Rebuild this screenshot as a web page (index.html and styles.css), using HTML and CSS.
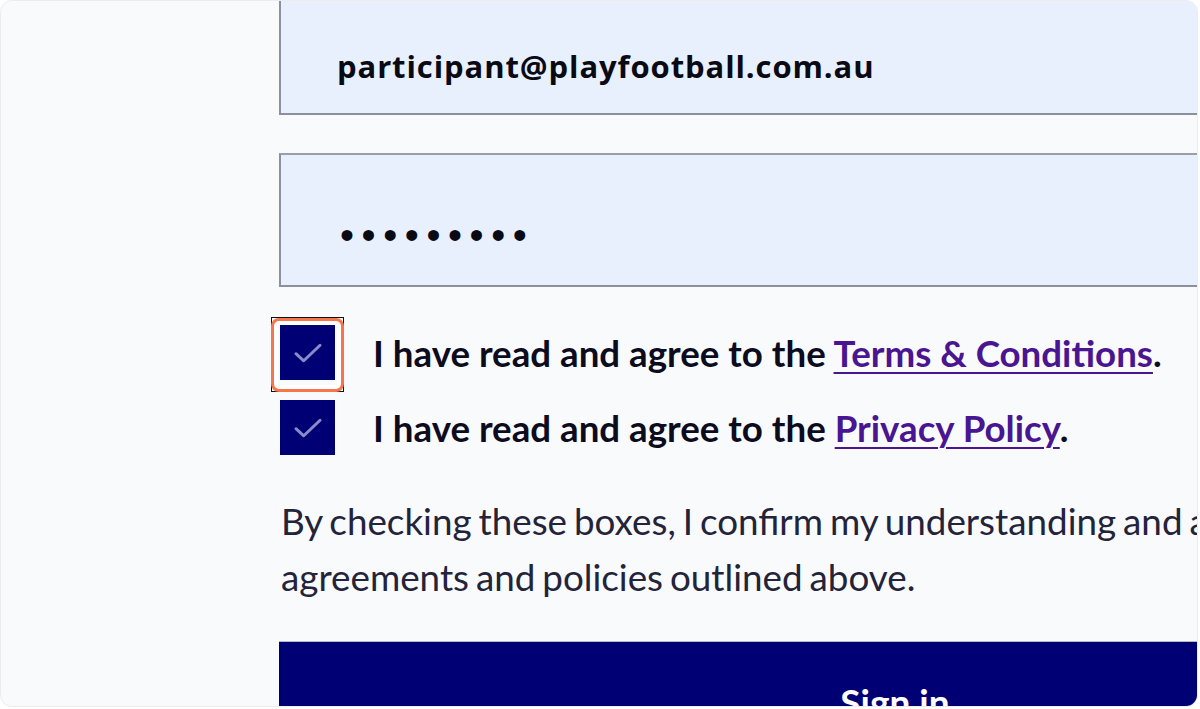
FILE: index.html
```html
<!DOCTYPE html>
<html lang="en">
<head>
<meta charset="utf-8">
<title>Sign in</title>
<link rel="stylesheet" href="styles.css">
</head>
<body>
<div class="card">
  <form class="form">
    <div class="field field-email"><span class="value">participant@playfootball.com.au</span></div>
    <div class="field field-password"><span class="dots">•••••••••</span></div>
    <div class="checks">
      <label class="check-row">
        <span class="box">
          <svg viewBox="0 0 24 24" width="34" height="34"><polyline points="3.5,12.5 9,17.5 20.5,6.5" fill="none" stroke="#8a8ac9" stroke-width="2.1" stroke-linecap="round" stroke-linejoin="round"/></svg>
          <span class="focus-frame"></span>
          <span class="ring"></span>
        </span>
        <span class="label">I have read and agree to the <a href="#" class="link">Terms &amp; Conditions</a>.</span>
      </label>
      <label class="check-row">
        <span class="box">
          <svg viewBox="0 0 24 24" width="34" height="34"><polyline points="3.5,12.5 9,17.5 20.5,6.5" fill="none" stroke="#8a8ac9" stroke-width="2.1" stroke-linecap="round" stroke-linejoin="round"/></svg>
        </span>
        <span class="label">I have read and agree to the <a href="#" class="link">Privacy Policy</a>.</span>
      </label>
    </div>
    <p class="note">By checking these boxes, I confirm my understanding and acceptance of the agreements and policies outlined above.</p>
    <button type="button" class="submit">Sign in</button>
  </form>
</div>
</body>
</html>
```

FILE: styles.css
```css
html, body {
  margin: 0;
  padding: 0;
  background: #ffffff;
}

.card {
  box-sizing: border-box;
  margin: 0 2px 2px 0;
  height: 707px;
  border: 1px solid #ececef;
  border-radius: 12px;
  background: #f9fafc;
  overflow: hidden;
}

.form {
  width: 1232px;
  margin: -20px 0 0 278px;
  display: flex;
  flex-direction: column;
}

.field {
  box-sizing: border-box;
  height: 134px;
  background: #e8f0fe;
  border: 2px solid #8b8f9e;
  border-top-color: #9a9eac;
  display: flex;
  align-items: center;
  padding: 30px 0 0 58px;
  color: #0a0a14;
}

.field-email {
  padding-top: 36px;
}

.field-password {
  margin-top: 38px;
}

.value {
  font-family: "Open Sans", "Noto Sans", sans-serif;
  font-weight: 700;
  font-size: 31px;
  letter-spacing: 0.9px;
  margin-left: -2px;
}

.dots {
  font-family: "Liberation Sans", Arial, sans-serif;
  font-size: 40px;
  letter-spacing: 7.6px;
  margin-left: 1px;
}

.checks {
  display: flex;
  flex-direction: column;
  gap: 20px;
  margin-top: 38px;
}

.check-row {
  display: flex;
  align-items: center;
  gap: 38px;
  padding-left: 1px;
}

.box {
  position: relative;
  flex: none;
  width: 55px;
  height: 55px;
  background: #000075;
  display: flex;
  align-items: center;
  justify-content: center;
}

.box svg {
  display: block;
}

.focus-frame {
  position: absolute;
  left: -9px;
  top: -8px;
  right: -9px;
  bottom: -12px;
  border: 1px solid #111111;
}

.ring {
  position: absolute;
  left: -9px;
  top: -7px;
  right: -9px;
  bottom: -12px;
  border: 3px solid #f4764a;
  border-radius: 8px;
  box-shadow: inset 0 0 0 4px #ffffff;
}

.label {
  font-family: Lato, "Open Sans", sans-serif;
  font-weight: 700;
  font-size: 36.7px;
  color: #0c0c1e;
}

.link {
  color: #4a1591;
  text-decoration: underline;
  text-decoration-thickness: 2px;
  text-underline-offset: 5px;
}

.note {
  margin: 38px 0 0 2px;
  font-family: Lato, "Open Sans", sans-serif;
  font-size: 36.8px;
  word-spacing: -2.5px;
  line-height: 56px;
  color: #23233a;
}

.submit {
  margin-top: 36px;
  height: 120px;
  border: 0;
  border-top: 1px solid #b8b8c8;
  background: #000075;
  color: #ffffff;
  font-family: Lato, "Open Sans", sans-serif;
  font-weight: 700;
  font-size: 37px;
  padding: 0;
  cursor: pointer;
}
```
